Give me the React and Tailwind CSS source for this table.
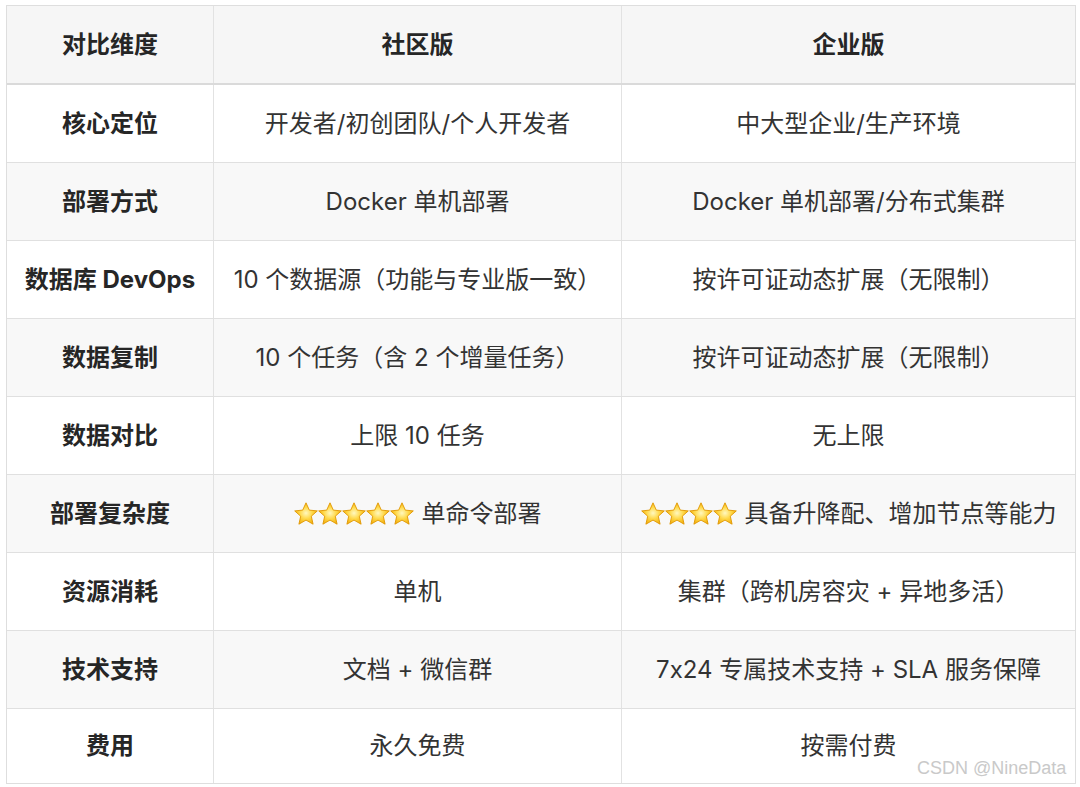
import React from "react";

const FONT = { fontFamily: '"Inter", "Noto Sans CJK SC", sans-serif' };

function Star() {
  return (
    <svg width="24" height="24" viewBox="0 0 24 24" className="inline-block shrink-0">
      <defs>
        <radialGradient id="sg" cx="50%" cy="48%" r="60%">
          <stop offset="0%" stopColor="#fff8c0" />
          <stop offset="45%" stopColor="#ffd94a" />
          <stop offset="100%" stopColor="#f0a500" />
        </radialGradient>
      </defs>
      <path
        d="M12 0.8 L15.3 8.1 L23.3 8.9 L17.3 14.2 L19.1 22.2 L12 18.1 L4.9 22.2 L6.7 14.2 L0.7 8.9 L8.7 8.1 Z"
        fill="url(#sg)"
        stroke="#e09600"
        strokeWidth="0.9"
        strokeLinejoin="round"
      />
    </svg>
  );
}

function Stars({ n, text }) {
  return (
    <span className="inline-flex items-center">
      {Array.from({ length: n }).map((_, i) => (
        <Star key={i} />
      ))}
      <span className="ml-[8px]">{text}</span>
    </span>
  );
}

const rows = [
  ["核心定位", "开发者/初创团队/个人开发者", "中大型企业/生产环境"],
  ["部署方式", "Docker 单机部署", "Docker 单机部署/分布式集群"],
  ["数据库 DevOps", "10 个数据源（功能与专业版一致）", "按许可证动态扩展（无限制）"],
  ["数据复制", "10 个任务（含 2 个增量任务）", "按许可证动态扩展（无限制）"],
  ["数据对比", "上限 10 任务", "无上限"],
  ["部署复杂度", <Stars n={5} text="单命令部署" />, <Stars n={4} text="具备升降配、增加节点等能力" />],
  ["资源消耗", "单机", "集群（跨机房容灾 + 异地多活）"],
  ["技术支持", "文档 + 微信群", "7x24 专属技术支持 + SLA 服务保障"],
  ["费用", "永久免费", "按需付费"],
];

export default function App() {
  return (
    <div
      className="relative w-[1080px] h-[787px] bg-white pl-[6px] pt-[5px] [font-feature-settings:'calt'_0]"
      style={FONT}
    >
      <div className="w-[1070px] border border-[#dedede]">
        <div className="grid grid-cols-[207px_408px_1fr] h-[79px] bg-[#f6f6f6] border-b-2 border-[#dadada] text-[24px] font-bold text-[#262626]">
          <div className="flex items-center justify-center border-r border-[#e2e2e2]">对比维度</div>
          <div className="flex items-center justify-center border-r border-[#e2e2e2]">社区版</div>
          <div className="flex items-center justify-center">企业版</div>
        </div>
        {rows.map((r, i) => (
          <div
            key={i}
            className={
              "grid grid-cols-[207px_408px_1fr] text-[24px] text-[#333333] " +
              (i % 2 === 1 ? "bg-[#f8f8f8] " : "bg-white ") +
              (i === rows.length - 1 ? "h-[74px]" : "h-[78px] border-b border-[#e0e0e0]")
            }
          >
            <div className="flex items-center justify-center border-r border-[#e2e2e2] font-bold text-[#262626]">
              {r[0]}
            </div>
            <div className="flex items-center justify-center border-r border-[#e2e2e2]">{r[1]}</div>
            <div className="flex items-center justify-center">{r[2]}</div>
          </div>
        ))}
      </div>
      <div
        className="absolute left-[917px] top-[759px] text-[18px] text-[#c9c9c9] leading-none"
        style={{ fontFamily: '"Liberation Sans", "Noto Sans CJK SC", sans-serif' }}
      >
        CSDN @NineData
      </div>
    </div>
  );
}
